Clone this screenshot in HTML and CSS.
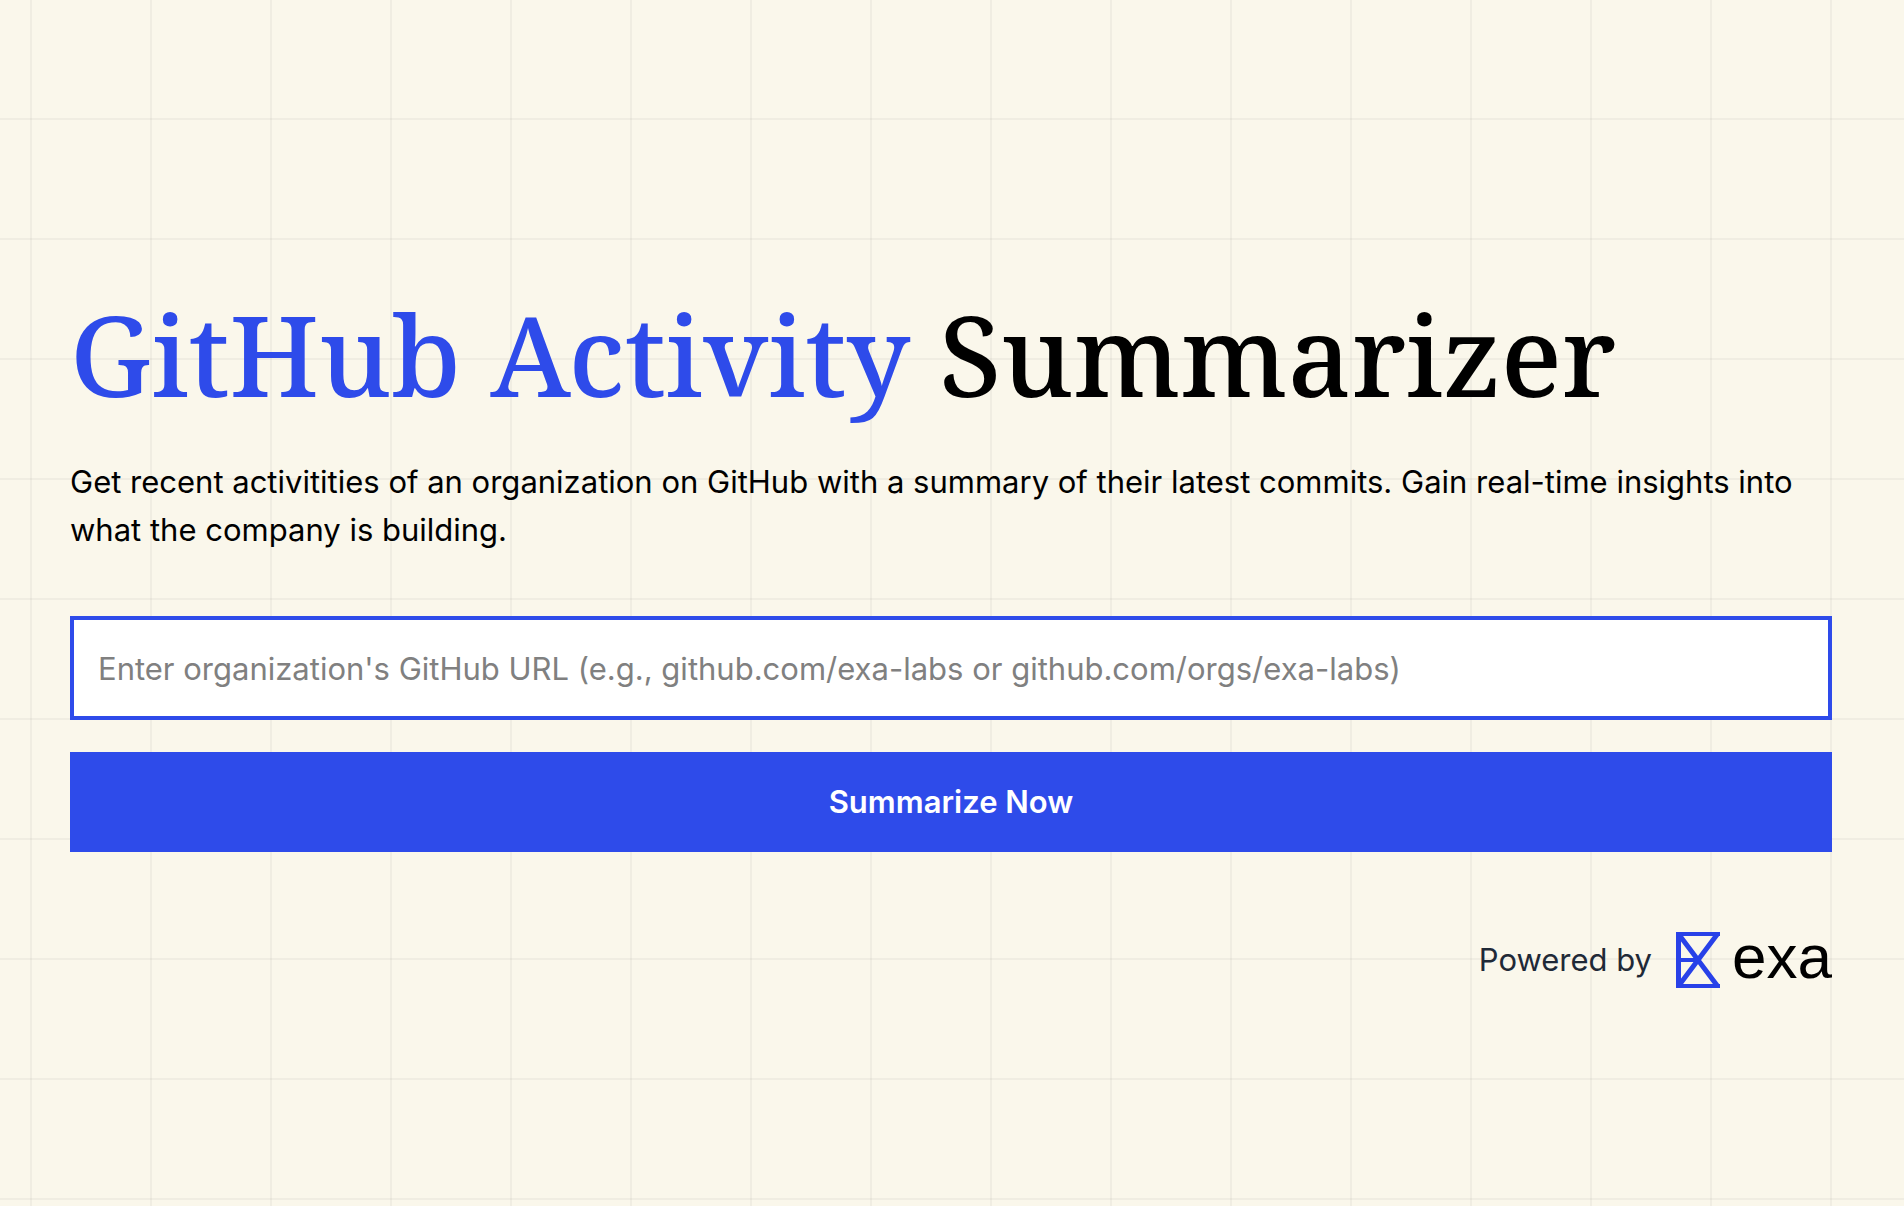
FILE: index.html
```html
<!DOCTYPE html>
<html lang="en">
<head>
<meta charset="utf-8">
<title>GitHub Activity Summarizer</title>
<link rel="stylesheet" href="styles.css">
</head>
<body>
<main class="page">
  <h1 class="title"><span class="accent">GitHub Activity</span> Summarizer</h1>
  <p class="intro">Get recent activitities of an organization on GitHub with a summary of their latest commits. Gain real-time insights into what the company is building.</p>
  <form class="form">
    <input class="field" type="text" aria-label="Organization's GitHub URL" placeholder="Enter organization's GitHub URL (e.g., github.com/exa-labs or github.com/orgs/exa-labs)">
    <button class="submit" type="submit">Summarize Now</button>
  </form>
  <footer class="credit">
    <span class="powered">Powered by</span>
    <a class="brand" href="#">
      <svg class="mark" viewBox="0 0 44 56" aria-hidden="true"><path d="M0 2H44M0 54H44M0 28H22" fill="none" stroke="currentColor" stroke-width="4"/><path d="M2.5 0V56M1 0L43 56M1 56L43 0" fill="none" stroke="currentColor" stroke-width="5"/></svg>
      <span class="word">exa</span>
    </a>
  </footer>
</main>
</body>
</html>
```
FILE: styles.css
```css
* { box-sizing: border-box; }
body {
  margin: 0;
  min-height: 100vh;
  display: flex;
  flex-direction: column;
  justify-content: center;
  background-color: #faf7eb;
  background-image:
    linear-gradient(to right, rgba(0, 0, 0, 0.04) 2px, transparent 2px),
    linear-gradient(to bottom, rgba(0, 0, 0, 0.04) 2px, transparent 2px);
  background-size: 120px 120px;
  background-position: 30px 118px;
  color: #000;
  font-family: Inter, "Liberation Sans", sans-serif;
  font-size: 31px;
  line-height: 48px;
}
.page { padding: 76px 72px 0 70px; }
.title {
  margin: 0 0 44px;
  font-family: "Noto Serif", "Liberation Serif", serif;
  font-size: 112px;
  line-height: 120px;
  font-weight: 500;
}
.accent { color: #2e4bea; }
.intro { margin: 0 0 62px; }
.form { display: flex; flex-direction: column; gap: 32px; }
.field {
  height: 104px;
  padding: 0 24px;
  border: 4px solid #2e4bea;
  border-radius: 0;
  background: #fff;
  font: inherit;
}
.field::placeholder { color: #808080; opacity: 1; }
.submit {
  height: 100px;
  border: 0;
  background: #2e4bea;
  color: #fff;
  font: inherit;
  font-weight: 600;
}
.credit { display: flex; justify-content: flex-end; align-items: center; gap: 24px; margin-top: 80px; }
.powered { color: #1f2937; }
.brand { display: flex; align-items: flex-start; gap: 12px; color: #000; text-decoration: none; }
.mark { width: 44px; height: 56px; color: #2841e8; }
.word { font-family: "Liberation Sans", sans-serif; font-size: 62px; line-height: 50px; }
```
